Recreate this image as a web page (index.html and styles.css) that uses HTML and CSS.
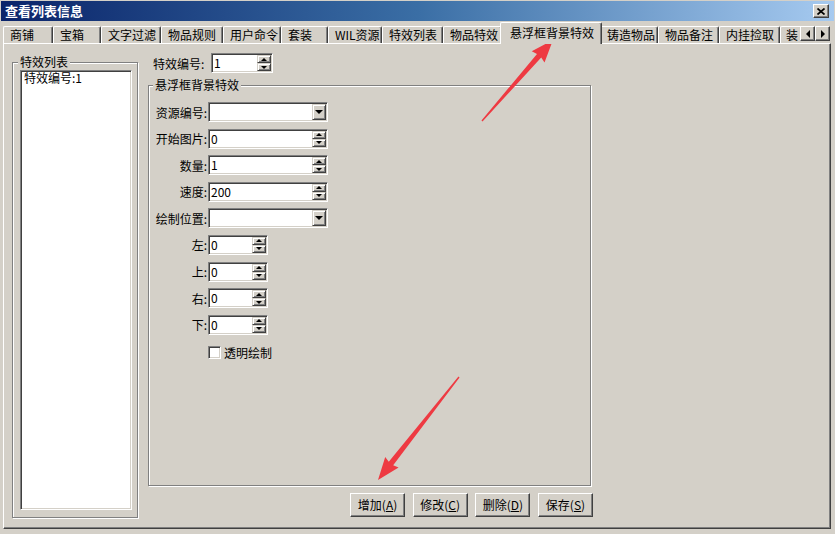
FILE: index.html
```html
<!DOCTYPE html>
<html lang="zh-CN">
<head>
<meta charset="utf-8">
<title>查看列表信息</title>
<link rel="stylesheet" href="styles.css">
</head>
<body>
<div class="window">
  <div class="titlebar">
    <span class="title">查看列表信息</span>
    <span class="close"><svg width="8" height="7" viewBox="0 0 8 7"><path d="M0.5 0.5 L7.5 6.5 M7.5 0.5 L0.5 6.5" stroke="#000" stroke-width="1.7"/></svg></span>
  </div>
  <div class="tabstrip">
    <div class="tabs">
      <div class="tab">商铺</div>
      <div class="tab">宝箱</div>
      <div class="tab">文字过滤</div>
      <div class="tab">物品规则</div>
      <div class="tab">用户命令</div>
      <div class="tab">套装</div>
      <div class="tab">WIL资源</div>
      <div class="tab">特效列表</div>
      <div class="tab">物品特效</div>
      <div class="tab active">悬浮框背景特效</div>
      <div class="tab">铸造物品</div>
      <div class="tab">物品备注</div>
      <div class="tab">内挂捡取</div>
      <div class="tab last">装</div>
    </div>
    <div class="scroller">
      <span class="sbtn"><i class="tri-left"></i></span>
      <span class="sbtn"><i class="tri-right"></i></span>
    </div>
  </div>
  <div class="panel">
    <div class="group list-group">
      <span class="legend">特效列表</span>
      <div class="listbox"><div class="item">特效编号:1</div></div>
    </div>
    <div class="main">
      <div class="toprow">
        <span class="toplbl">特效编号:</span>
        <div class="field top-spin"><span class="val">1</span><span class="spinbtn"><span class="half"><i class="up"></i></span><span class="half"><i class="dn"></i></span></span></div>
      </div>
      <div class="group effect-group">
        <span class="legend">悬浮框背景特效</span>
        <div class="form">
          <div class="row"><span class="lbl">资源编号:</span><div class="field wide"><span class="val"></span><span class="btn"><i class="dn"></i></span></div></div>
          <div class="row"><span class="lbl">开始图片:</span><div class="field wide"><span class="val">0</span><span class="spinbtn"><span class="half"><i class="up"></i></span><span class="half"><i class="dn"></i></span></span></div></div>
          <div class="row"><span class="lbl">数量:</span><div class="field wide"><span class="val">1</span><span class="spinbtn"><span class="half"><i class="up"></i></span><span class="half"><i class="dn"></i></span></span></div></div>
          <div class="row"><span class="lbl">速度:</span><div class="field wide"><span class="val">200</span><span class="spinbtn"><span class="half"><i class="up"></i></span><span class="half"><i class="dn"></i></span></span></div></div>
          <div class="row"><span class="lbl">绘制位置:</span><div class="field wide"><span class="val"></span><span class="btn"><i class="dn"></i></span></div></div>
          <div class="row"><span class="lbl">左:</span><div class="field narrow"><span class="val">0</span><span class="spinbtn"><span class="half"><i class="up"></i></span><span class="half"><i class="dn"></i></span></span></div></div>
          <div class="row"><span class="lbl">上:</span><div class="field narrow"><span class="val">0</span><span class="spinbtn"><span class="half"><i class="up"></i></span><span class="half"><i class="dn"></i></span></span></div></div>
          <div class="row"><span class="lbl">右:</span><div class="field narrow"><span class="val">0</span><span class="spinbtn"><span class="half"><i class="up"></i></span><span class="half"><i class="dn"></i></span></span></div></div>
          <div class="row"><span class="lbl">下:</span><div class="field narrow"><span class="val">0</span><span class="spinbtn"><span class="half"><i class="up"></i></span><span class="half"><i class="dn"></i></span></span></div></div>
        </div>
        <div class="checkrow"><span class="checkbox"></span><span class="checklbl">透明绘制</span></div>
      </div>
      <div class="buttons">
        <button class="button">增加(<u>A</u>)</button>
        <button class="button">修改(<u>C</u>)</button>
        <button class="button">删除(<u>D</u>)</button>
        <button class="button">保存(<u>S</u>)</button>
      </div>
    </div>
  </div>
  <svg class="arrows" width="835" height="534" viewBox="0 0 835 534">
    <polygon transform="translate(482 121) rotate(-48.8)" points="0,-0.7 86.7,-2.8 85.2,-8.5 107.7,0 85.2,8.5 86.7,2.8 0,0.7" fill="#ee3a42"/>
    <polygon transform="translate(459 377) rotate(128.2)" points="0,-0.7 110,-2.8 108.5,-8.5 131,0 108.5,8.5 110,2.8 0,0.7" fill="#ee3a42"/>
  </svg>
</div>
</body>
</html>
```
FILE: styles.css
```css
* { box-sizing: border-box; }
html, body { margin: 0; padding: 0; }
body {
  width: 835px;
  height: 534px;
  overflow: hidden;
  background: #d4d0c8;
  font-family: "Noto Sans CJK SC", "Noto Sans", sans-serif;
  font-size: 12px;
  color: #000;
}
.window {
  position: relative;
  width: 835px;
  height: 534px;
  background: #d4d0c8;
  padding-top: 1px;
}
.titlebar {
  height: 20px;
  margin: 0 1px;
  padding: 0 5px 0 4px;
  display: flex;
  align-items: center;
  justify-content: space-between;
  background: linear-gradient(to right, #0a246a 0%, #3a6ea5 50%, #a6caf0 100%);
}
.title {
  color: #fff;
  font-weight: bold;
  font-size: 13px;
  line-height: 16px;
}
.close {
  width: 16px;
  height: 14px;
  background: #d4d0c8;
  border: 1px solid;
  border-color: #fff #404040 #404040 #fff;
  box-shadow: inset -1px -1px 0 #808080;
  display: flex;
  align-items: center;
  justify-content: center;
}
.close svg { display: block; }

/* tabs */
.tabstrip {
  position: relative;
  height: 22px;
}
.tabs {
  display: flex;
  align-items: flex-end;
  height: 22px;
  width: 800px;
  padding-left: 3px;
  overflow-x: clip;
}
.tab {
  flex: none;
  height: 17px;
  line-height: 15px;
  padding-left: 6px;
  border-top: 1px solid #fff;
  border-left: 1px solid #fff;
  border-right: 1px solid #404040;
  box-shadow: inset -1px 0 0 #808080;
  border-radius: 2px 2px 0 0;
  white-space: nowrap;
  background: #d4d0c8;
}
.tab:nth-child(1) { width: 50px; }
.tab:nth-child(2) { width: 48px; }
.tab:nth-child(3) { width: 60px; }
.tab:nth-child(4) { width: 62px; }
.tab:nth-child(5) { width: 58px; }
.tab:nth-child(6) { width: 47px; }
.tab:nth-child(7) { width: 54px; }
.tab:nth-child(8) { width: 61px; }
.tab:nth-child(9) { width: 59px; }
.tab:nth-child(10) { width: 102px; }
.tab:nth-child(11) { width: 58px; }
.tab:nth-child(12) { width: 61px; }
.tab:nth-child(13) { width: 61px; }
.tab.last { width: 40px; padding-left: 5px; }
.tab.active {
  height: 22px;
  margin: 0 -2px -1px;
  padding-left: 9px;
  line-height: 19px;
  position: relative;
  z-index: 1;
}
.scroller {
  position: absolute;
  top: 5px;
  right: 5px;
  display: flex;
}
.sbtn {
  width: 15px;
  height: 15px;
  background: #d4d0c8;
  border: 1px solid;
  border-color: #fff #404040 #404040 #fff;
  box-shadow: inset -1px -1px 0 #808080;
  display: flex;
  align-items: center;
  justify-content: center;
}
.tri-left {
  width: 0; height: 0;
  border-top: 4px solid transparent;
  border-bottom: 4px solid transparent;
  border-right: 4px solid #000;
}
.tri-right {
  width: 0; height: 0;
  border-top: 4px solid transparent;
  border-bottom: 4px solid transparent;
  border-left: 4px solid #000;
}

/* panel */
.panel {
  margin-left: 3px;
  width: 828px;
  height: 486px;
  border-top: 1px solid #fff;
  border-left: 1px solid #fff;
  border-right: 1px solid #404040;
  border-bottom: 1px solid #404040;
  box-shadow: inset -1px -1px 0 #808080;
  display: flex;
  align-items: flex-start;
  padding-left: 8px;
}
.group {
  border: 1px solid #808080;
  box-shadow: inset 1px 1px 0 #fff, 1px 1px 0 #fff;
  display: flex;
  flex-direction: column;
}
.legend {
  align-self: flex-start;
  margin: -8px 0 0 -2px;
  padding: 0 2px;
  background: #d4d0c8;
  line-height: 14px;
  white-space: nowrap;
}
.list-group {
  margin-top: 18px;
  width: 126px;
  height: 456px;
  padding: 0 5px 7px 7px;
}
.listbox {
  flex: 1;
  margin-top: 1px;
  background: #fff;
  border: 1px solid;
  border-color: #808080 #fff #fff #808080;
  box-shadow: inset 1px 1px 0 #404040, inset -1px -1px 0 #d4d0c8;
  padding: 0 3px;
}
.item { line-height: 14px; }

.main {
  margin-left: 10px;
  width: 445px;
  display: flex;
  flex-direction: column;
}
.toprow {
  margin-top: 9px;
  height: 20px;
  display: flex;
  align-items: center;
}
.toplbl {
  width: 63px;
  padding-left: 5px;
  white-space: nowrap;
}
.field {
  display: flex;
  height: 20px;
  background: #fff;
  border: 1px solid;
  border-color: #808080 #fff #fff #808080;
  box-shadow: inset 1px 1px 0 #404040, inset -1px -1px 0 #d4d0c8;
}
.top-spin { width: 62px; }
.wide { width: 120px; }
.narrow { width: 60px; }
.val {
  flex: 1;
  padding-left: 2px;
  line-height: 18px;
}
.btn, .half {
  background: #d4d0c8;
  border: 1px solid;
  border-color: #d4d0c8 #404040 #404040 #d4d0c8;
  box-shadow: inset 1px 1px 0 #fff, inset -1px -1px 0 #808080;
  display: flex;
  align-items: center;
  justify-content: center;
}
.btn {
  width: 14px;
  height: 16px;
  margin: 1px;
}
.spinbtn {
  width: 14px;
  height: 16px;
  margin: 1px;
  display: flex;
  flex-direction: column;
}
.half { flex: 1; }
.dn {
  width: 0; height: 0;
  border-left: 3px solid transparent;
  border-right: 3px solid transparent;
  border-top: 3px solid #000;
}
.btn .dn {
  border-left-width: 4px;
  border-right-width: 4px;
  border-top-width: 4px;
}
.up {
  width: 0; height: 0;
  border-left: 3px solid transparent;
  border-right: 3px solid transparent;
  border-bottom: 3px solid #000;
}

.effect-group {
  margin-top: 12px;
  width: 443px;
  height: 401px;
  padding-left: 1px;
}
.effect-group .legend { margin-left: 3px; }
.form {
  margin-top: 10px;
  display: flex;
  flex-direction: column;
  gap: 6.6px;
}
.row {
  display: flex;
  align-items: center;
  height: 20px;
}
.lbl {
  width: 58px;
  padding-right: 1px;
  text-align: right;
  white-space: nowrap;
}
.checkrow {
  margin-top: 11px;
  margin-left: 58px;
  display: flex;
  align-items: center;
  height: 14px;
}
.checkbox {
  width: 13px;
  height: 13px;
  background: #fff;
  border: 1px solid;
  border-color: #808080 #fff #fff #808080;
  box-shadow: inset 1px 1px 0 #404040, inset -1px -1px 0 #d4d0c8;
}
.checklbl {
  margin-left: 3px;
  line-height: 14px;
}
.buttons {
  margin-top: 7px;
  display: flex;
  justify-content: flex-end;
  gap: 7.67px;
}
.button {
  width: 55px;
  height: 24px;
  padding: 0;
  font: inherit;
  color: #000;
  background: #d4d0c8;
  border: 1px solid;
  border-color: #fff #404040 #404040 #fff;
  box-shadow: inset -1px -1px 0 #808080;
  line-height: 20px;
}
.button u { text-underline-offset: 1px; }

.arrows {
  position: absolute;
  left: 0;
  top: 0;
  pointer-events: none;
}
```
